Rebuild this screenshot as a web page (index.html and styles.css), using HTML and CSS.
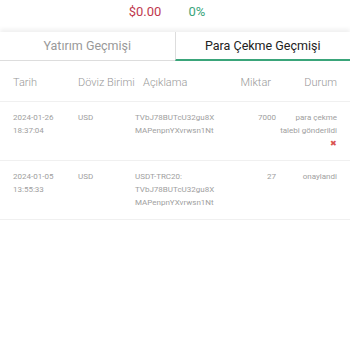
FILE: index.html
```html
<!DOCTYPE html>
<html lang="tr">
<head>
    <meta charset="UTF-8">
    <meta name="viewport" content="width=device-width, initial-scale=1.0">
    <title>Para Çekme Geçmişi</title>
    <link rel="stylesheet" href="styles.css">
</head>
<body>

    <div class="summary">
        <span class="amount">$0.00</span>
        <span class="percent">0%</span>
    </div>

    <div class="tabs">
        <div class="tab">Yatırım Geçmişi</div>
        <div class="tab active">Para Çekme Geçmişi</div>
    </div>

    <div class="history">
        <div class="row head">
            <div class="c-date">Tarih</div>
            <div class="c-cur">Döviz Birimi</div>
            <div class="c-desc">Açıklama</div>
            <div class="c-amt">Miktar</div>
            <div class="c-status">Durum</div>
        </div>

        <div class="row">
            <div class="c-date">2024-01-26<br>18:37:04</div>
            <div class="c-cur">USD</div>
            <div class="c-desc">TVbJ78BUTcU32gu8X<br>MAPenpnYXvrwsn1Nt</div>
            <div class="c-amt">7000</div>
            <div class="c-status">para çekme<br>talebi gönderildi<br><span class="cancel">✖</span></div>
        </div>

        <div class="row">
            <div class="c-date">2024-01-05<br>13:55:33</div>
            <div class="c-cur">USD</div>
            <div class="c-desc">USDT-TRC20:<br>TVbJ78BUTcU32gu8X<br>MAPenpnYXvrwsn1Nt</div>
            <div class="c-amt">27</div>
            <div class="c-status">onaylandi</div>
        </div>
    </div>

</body>
</html>
```

FILE: styles.css
```css
body {
    font-family: 'Roboto', 'Liberation Sans', sans-serif;
    background-color: #fff;
    margin: 0;
    padding: 0;
    color: #999;
}

.summary {
    display: flex;
    justify-content: center;
    gap: 27px;
    height: 32px;
    padding-top: 4px;
    padding-right: 16px;
    box-sizing: border-box;
    font-size: 13px;
    line-height: 15px;
}

.amount {
    color: #c0394e;
}

.percent {
    color: #3aa57a;
}

.tabs {
    display: flex;
    border-bottom: 1px solid #ddd;
    box-shadow: 0 -3px 4px rgba(0, 0, 0, 0.06);
}

.tab {
    flex: 1;
    text-align: center;
    height: 27px;
    line-height: 27px;
    font-size: 12.5px;
    color: #999;
}

.tab.active {
    color: #222;
    border-left: 1px solid #ddd;
    border-bottom: 2px solid #3aa57a;
    margin-bottom: -1px;
}

.row {
    display: grid;
    grid-template-columns: 65px 57px 100px 41px 61px;
    padding: 9px 13px 10px;
    border-bottom: 1px solid #f0f0f0;
    font-size: 8px;
    line-height: 13px;
    color: #a0a0a0;
}

.row.head {
    padding: 14px 13px 10px;
    font-size: 11px;
    font-weight: 300;
    line-height: 16px;
    color: #999;
    white-space: nowrap;
}

.head .c-desc {
    padding-left: 8px;
}

.head .c-amt {
    margin-right: 5px;
}

.c-amt,
.c-status {
    text-align: right;
}

.cancel {
    color: #d9534f;
    font-size: 8px;
}
```
